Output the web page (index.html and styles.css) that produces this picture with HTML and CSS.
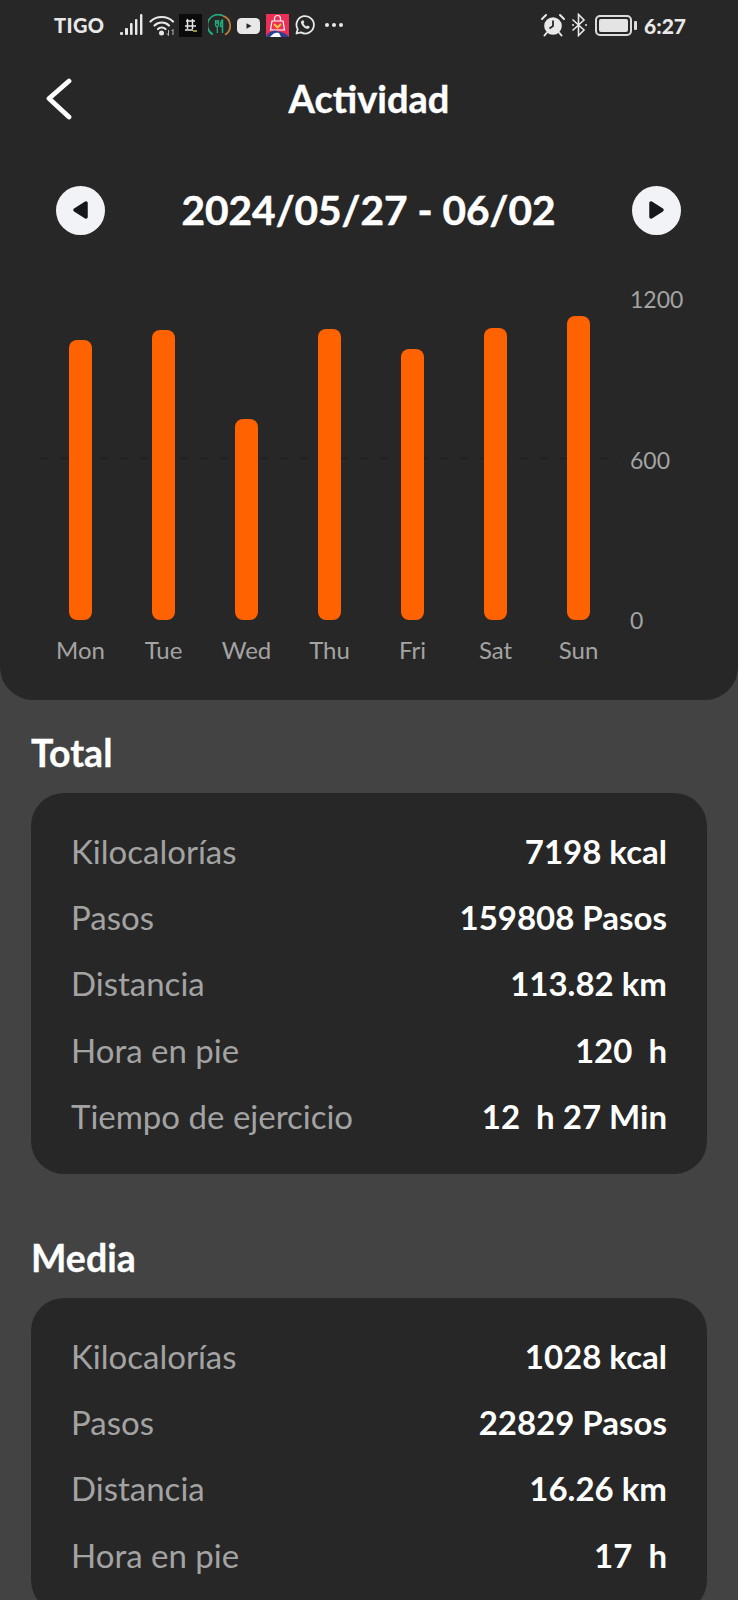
FILE: index.html
```html
<!DOCTYPE html>
<html lang="es">
<head>
<meta charset="utf-8">
<title>Actividad</title>
<link rel="stylesheet" href="styles.css">
</head>
<body>
<div class="page">
  <header class="panel">
    <div class="status">
      <div class="status-left">
        <span class="carrier">TIGO</span>
        <svg class="ic-signal" viewBox="0 0 23 22"><g fill="#e8e8e8"><rect x="0" y="18" width="3" height="3" rx="1.2"/><rect x="5" y="14" width="3" height="7" rx="1"/><rect x="10" y="9" width="2.6" height="12" rx="1"/><rect x="15" y="5" width="2.4" height="16" rx="1"/><rect x="20" y="0" width="2.4" height="21" rx="1"/></g></svg>
        <svg class="ic-wifi" viewBox="0 0 26 22"><g fill="none" stroke="#e8e8e8" stroke-width="2.2" stroke-linecap="round"><path d="M1.5 7.5C7.5 1.5 18 1.500 24 7.500"/><path d="M5.500 11.500C9.500 7.500 16 7.500 20 11.500"/><path d="M9 15c2-2 5.500-2 7.500 0"/></g><circle cx="12.500" cy="19" r="2.500" fill="#e8e8e8"/><path d="M19.500 16v5.500M18 19.500l1.500 2M24 15.500V21M22.500 17l1.500-1.500" stroke="#bbb" stroke-width="1" fill="none"/></svg>
        <svg class="ic-app" viewBox="0 0 23 23"><rect width="23" height="23" fill="#0b0b0b"/><path d="M7 7h9M6 12h11M8.500 5v10M13.500 5v10M6 16h8" stroke="#e6e6e6" stroke-width="1.500" fill="none"/><path d="M14 17h4" stroke="#b9c23a" stroke-width="1.500"/></svg>
        <svg class="ic-app" viewBox="0 0 23 23"><path d="M5 20.500A10.500 10.500 0 0 1 15 1.800" fill="none" stroke="#1fae7c" stroke-width="1.800"/><path d="M15 1.800A10.500 10.500 0 0 1 17 20.800" fill="none" stroke="#b5813a" stroke-width="1.800"/><path d="M7.500 6v4.500c0 1.500 1 2 1.800 2V19M10.500 6v4.500c0 1.500-.5 2-1.200 2M9 6v4" fill="none" stroke="#1fae7c" stroke-width="1.300"/><path d="M14.500 19V6c-1.800.5-2 4-2 6.500h2" fill="none" stroke="#1fae7c" stroke-width="1.500"/></svg>
        <svg class="ic-app" viewBox="0 0 23 23"><rect x="0" y="4" width="23" height="16" rx="4.500" fill="#e8e8e8"/><path d="M9.500 9.200l5 2.800-5 2.800z" fill="#272727"/></svg>
        <svg class="ic-app" viewBox="0 0 23 23"><rect width="23" height="23" fill="#ee2f55"/><path d="M6 7h11l1.500 9h-14z" fill="none" stroke="#fff" stroke-width="1.200"/><path d="M8.500 7V4.500a3 3 0 0 1 6 0V7" fill="none" stroke="#fff" stroke-width="1.200"/><path d="M8 10l3.500 3.500L15 10" fill="none" stroke="#f6c542" stroke-width="2"/><path d="M0 23c2-5 7-7 11-6s9 2 12 6z" fill="#2a3f8f"/><path d="M4 23c3-4 6-5 9-4l2 4z" fill="#fff"/></svg>
        <svg class="ic-wa" viewBox="0 0 22 22"><path d="M2.500 19.500l1.200-4.300A8.700 8.700 0 1 1 7 18.400z" fill="none" stroke="#e8e8e8" stroke-width="1.800" stroke-linejoin="round"/><path d="M8 6.500c-1.500 1-1.300 3 .5 5.200s4 3.500 5.500 3 1.800-1.500 1.500-2.200l-2-1-1 1c-1.200-.5-2.500-1.800-3-3l.8-1-1-2.200z" fill="#e8e8e8"/></svg>
        <span class="dots"><i></i><i></i><i></i></span>
      </div>
      <div class="status-right">
        <svg class="ic-alarm" viewBox="0 0 24 24"><circle cx="12" cy="13" r="8.800" fill="#e8e8e8"/><path d="M12 7.500V13l-3.500 2.500" fill="none" stroke="#272727" stroke-width="1.800"/><path d="M1 6l4-4M23 6l-4-4M5.500 20l-2 2.500M18.500 20l2 2.500" stroke="#e8e8e8" stroke-width="2" stroke-linecap="round"/></svg>
        <svg class="ic-bt" viewBox="0 0 17 24"><path d="M1.500 6.500L13 17l-5.500 5.500V1.500L13 7 1.500 17.500" fill="none" stroke="#e8e8e8" stroke-width="1.600"/><circle cx="2" cy="12" r="1" fill="#e8e8e8"/><circle cx="15" cy="12" r="1" fill="#e8e8e8"/></svg>
        <span class="battery"><span class="battery-fill"></span></span>
        <span class="clock">6:27</span>
      </div>
    </div>

    <nav class="nav">
      <svg class="back" viewBox="0 0 26 42"><path d="M23 3L3 20.500 23 39" fill="none" stroke="#fff" stroke-width="4.800" stroke-linecap="round" stroke-linejoin="round"/></svg>
      <h1 class="title">Actividad</h1>
    </nav>

    <div class="week">
      <button class="round"><svg viewBox="0 0 18 20"><path d="M14 3v14L3 10z" fill="#15171c" stroke="#15171c" stroke-width="3.500" stroke-linejoin="round"/></svg></button>
      <span class="range">2024/05/27 - 06/02</span>
      <button class="round"><svg viewBox="0 0 18 20"><path d="M4 3v14l11-7z" fill="#15171c" stroke="#15171c" stroke-width="3.500" stroke-linejoin="round"/></svg></button>
    </div>

    <div class="chart">
      <div class="plot">
        <div class="midline"></div>
        <div class="bars">
          <div class="col"><span class="bar" style="height:280px"></span></div>
          <div class="col"><span class="bar" style="height:290px"></span></div>
          <div class="col"><span class="bar" style="height:201px"></span></div>
          <div class="col"><span class="bar" style="height:291px"></span></div>
          <div class="col"><span class="bar" style="height:271px"></span></div>
          <div class="col"><span class="bar" style="height:292px"></span></div>
          <div class="col"><span class="bar" style="height:304px"></span></div>
        </div>
        <div class="axis"><span>1200</span><span>600</span><span>0</span></div>
      </div>
      <div class="days">
        <span>Mon</span><span>Tue</span><span>Wed</span><span>Thu</span><span>Fri</span><span>Sat</span><span>Sun</span>
      </div>
    </div>
  </header>

  <main class="content">
    <section class="group">
      <h2 class="group-title">Total</h2>
      <div class="card">
        <div class="row"><span class="label">Kilocalorías</span><span class="value">7198 kcal</span></div>
        <div class="row"><span class="label">Pasos</span><span class="value">159808 Pasos</span></div>
        <div class="row"><span class="label">Distancia</span><span class="value">113.82 km</span></div>
        <div class="row"><span class="label">Hora en pie</span><span class="value">120&nbsp; h</span></div>
        <div class="row"><span class="label">Tiempo de ejercicio</span><span class="value">12&nbsp; h 27 Min</span></div>
      </div>
    </section>
    <section class="group">
      <h2 class="group-title">Media</h2>
      <div class="card">
        <div class="row"><span class="label">Kilocalorías</span><span class="value">1028 kcal</span></div>
        <div class="row"><span class="label">Pasos</span><span class="value">22829 Pasos</span></div>
        <div class="row"><span class="label">Distancia</span><span class="value">16.26 km</span></div>
        <div class="row"><span class="label">Hora en pie</span><span class="value">17&nbsp; h</span></div>
      </div>
    </section>
  </main>
</div>
</body>
</html>
```
FILE: styles.css
```css
* { box-sizing: border-box; }
html, body { margin: 0; padding: 0; }
body { background: #434343; font-family: "Lato", "Noto Sans", sans-serif; color: #fff; }
.page { width: 738px; height: 1600px; overflow: hidden; background: #434343; }

.panel { background: #272727; height: 700px; border-radius: 0 0 33px 33px; }

.status { height: 50px; padding: 0 52px 0 54px; display: flex; justify-content: space-between; align-items: center; }
.status-left, .status-right { display: flex; align-items: center; }
.carrier { font-size: 20px; font-weight: 900; color: #e8e8e8; width: 66px; letter-spacing: .4px; }
.ic-signal { width: 23px; height: 22px; margin-right: 6px; }
.ic-wifi { width: 26px; height: 22px; margin-right: 4px; }
.ic-app { width: 23px; height: 23px; margin-right: 6px; flex: none; }
.ic-wa { width: 22px; height: 22px; margin-right: 9px; margin-left: -1px; }
.dots { display: flex; gap: 3px; }
.dots i { width: 4px; height: 4px; border-radius: 50%; background: #e8e8e8; }
.ic-alarm { width: 24px; height: 24px; margin-right: 6px; }
.ic-bt { width: 17px; height: 24px; margin-right: 7px; }
.battery { width: 37px; height: 21px; border: 2px solid #dcdcdc; border-radius: 5px; padding: 2px; position: relative; margin-right: 8px; display: flex; }
.battery::after { content: ""; position: absolute; right: -7px; top: 4px; width: 3px; height: 9px; background: #dcdcdc; border-radius: 1px; }
.battery-fill { flex: 1; background: #e4e4e4; border-radius: 2px; }
.clock { font-size: 21px; font-weight: 900; color: #e8e8e8; margin-left: 4px; }

.nav { height: 98px; padding-bottom: 2px; display: flex; align-items: center; justify-content: center; position: relative; }
.back { position: absolute; left: 46px; top: 28px; width: 26px; height: 42px; }
.title { margin: 0; font-size: 38px; font-weight: 700; line-height: 44px; -webkit-text-stroke: .4px #fff; }

.week { height: 124px; padding: 0 57px 0 56px; display: flex; align-items: center; justify-content: space-between; }
.round { width: 49px; height: 49px; border: 0; padding: 0; border-radius: 50%; background: #f2f3f7; display: flex; align-items: center; justify-content: center; }
.round svg { width: 18px; height: 20px; }
.range { font-size: 40.6px; font-weight: 700; line-height: 50px; -webkit-text-stroke: .5px #fff; }

.chart { margin-top: 13px; }
.plot { height: 335px; padding-left: 39px; display: flex; position: relative; }
.midline { position: absolute; left: 40px; width: 582px; top: 173px; height: 1px; background: repeating-linear-gradient(90deg, #1c1c1c 0 8px, transparent 8px 20px); }
.bars { width: 581px; display: flex; align-items: flex-end; position: relative; }
.col { width: 83px; display: flex; justify-content: center; }
.bar { width: 23px; background: #ff6200; border-radius: 8px; }
.axis { margin-left: 10px; height: 349px; display: flex; flex-direction: column; justify-content: space-between; font-size: 23px; line-height: 28px; color: #a3a3a3; }
.days { margin-top: 16px; padding-left: 39px; width: 620px; display: flex; font-size: 24px; line-height: 28px; color: #a3a3a3; }
.days span { width: 83px; text-align: center; }

.content { padding: 0 31px; }
.group { margin-top: 62px; }
.group:first-child { margin-top: 31px; }
.group-title { margin: 0 0 18px; font-size: 37.5px; font-weight: 700; line-height: 44px; -webkit-text-stroke: .3px #fff; }
.card { background: #272727; border-radius: 33px; padding: 24.5px 40px 24.5px 40px; }
.row { height: 66.4px; display: flex; justify-content: space-between; align-items: center; font-size: 33px; }
.label { color: #a3a3a3; font-weight: 400; }
.value { color: #fff; font-weight: 700; }
```
